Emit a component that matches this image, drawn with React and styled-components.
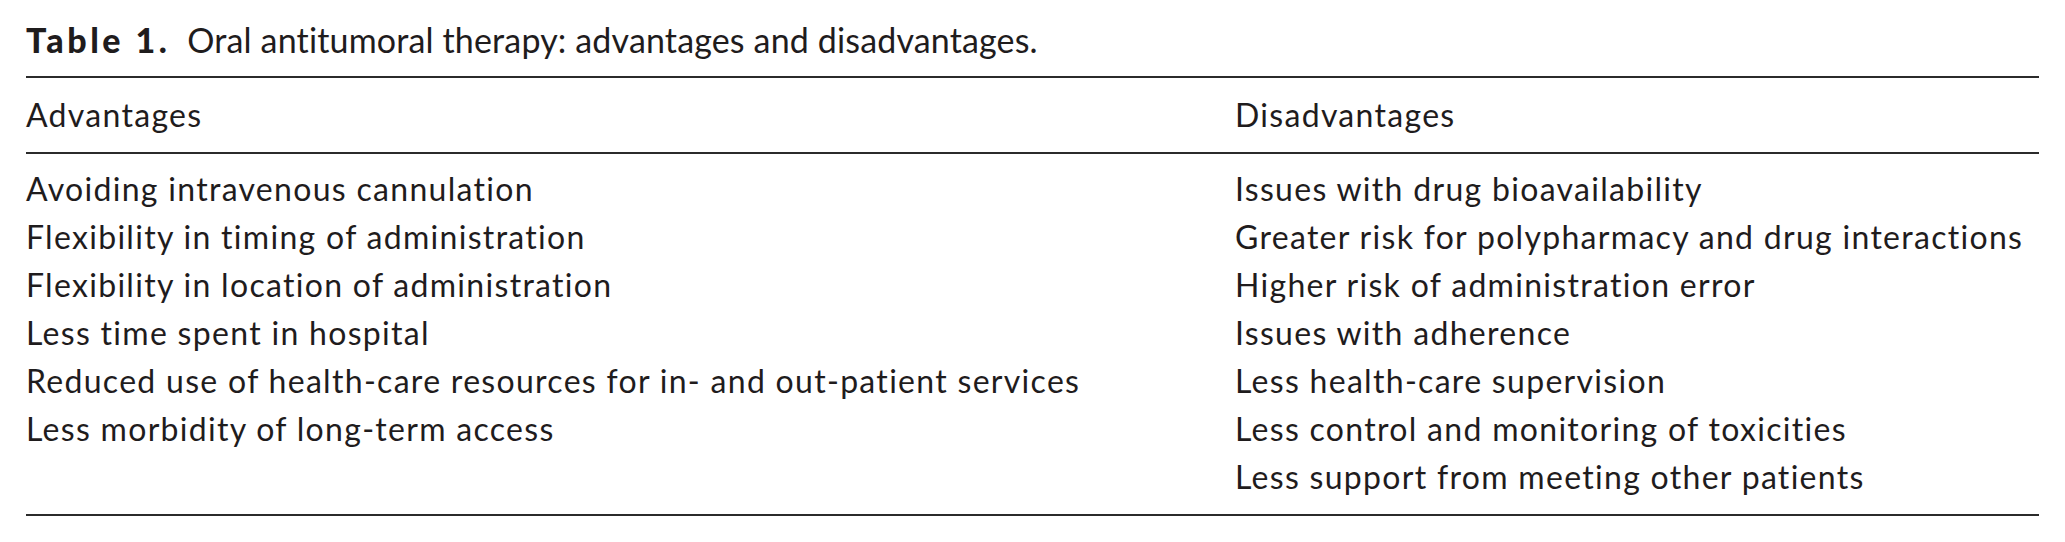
import styled, { createGlobalStyle } from "styled-components";

const GlobalStyle = createGlobalStyle`
  html, body {
    margin: 0;
    padding: 0;
    background: #ffffff;
  }
  body {
    font-family: Lato, "Open Sans", sans-serif;
    color: #1f1c1d;
  }
`;

const advantages = [
  "Avoiding intravenous cannulation",
  "Flexibility in timing of administration",
  "Flexibility in location of administration",
  "Less time spent in hospital",
  "Reduced use of health-care resources for in- and out-patient services",
  "Less morbidity of long-term access",
];

const disadvantages = [
  "Issues with drug bioavailability",
  "Greater risk for polypharmacy and drug interactions",
  "Higher risk of administration error",
  "Issues with adherence",
  "Less health-care supervision",
  "Less control and monitoring of toxicities",
  "Less support from meeting other patients",
];

const App = () => {
  return (
    <Page>
      <GlobalStyle />
      <Caption>
        <b>Table 1.</b> Oral antitumoral therapy: advantages and disadvantages.
      </Caption>

      <Table>
        <HeadRow>
          <Cell>Advantages</Cell>
          <Cell>Disadvantages</Cell>
        </HeadRow>
        <Body>
          <Column>
            {advantages.map((item) => (
              <Cell key={item}>{item}</Cell>
            ))}
          </Column>
          <Column>
            {disadvantages.map((item) => (
              <Cell key={item}>{item}</Cell>
            ))}
          </Column>
        </Body>
      </Table>
    </Page>
  );
};

export default App;

const Page = styled.div`
  width: 2013px;
  padding: 20px 0 0 26px;
`;

const Caption = styled.div`
  font-size: 34px;
  line-height: 40px;
  letter-spacing: 0.15px;
  white-space: nowrap;
  margin-bottom: 16px;

  b {
    font-weight: 900;
    letter-spacing: 3.5px;
    margin-right: 8px;
  }
`;

const Table = styled.div`
  border-top: 2px solid #2b2b2b;
  border-bottom: 2px solid #2b2b2b;
`;

const HeadRow = styled.div`
  display: grid;
  grid-template-columns: 1209px 1fr;
  padding: 13px 0 13px;
  border-bottom: 2px solid #2b2b2b;
`;

const Body = styled.div`
  display: grid;
  grid-template-columns: 1209px 1fr;
  padding: 11px 0 13px;
`;

const Column = styled.div`
  display: flex;
  flex-direction: column;
`;

const Cell = styled.div`
  font-size: 32px;
  line-height: 48px;
  letter-spacing: 1.3px;
  white-space: nowrap;
`;
